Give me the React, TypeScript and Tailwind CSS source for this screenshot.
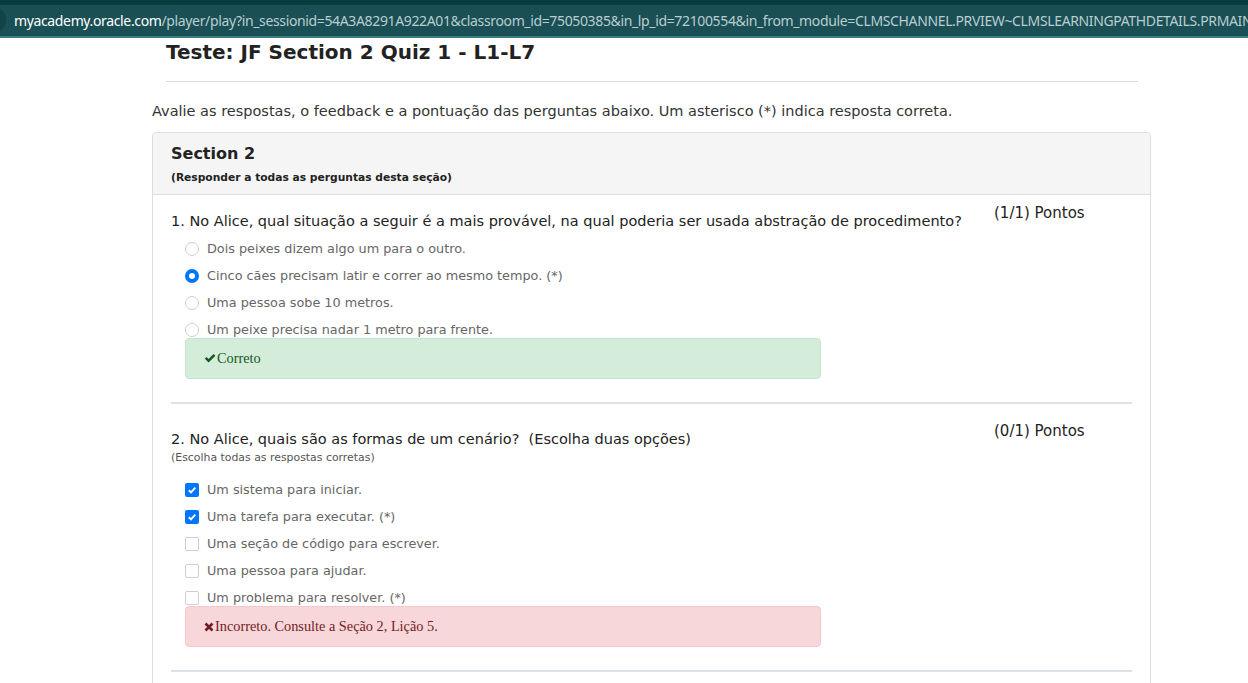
import React from "react";

const sans = { fontFamily: '"DejaVu Sans", Verdana, sans-serif' };

function Radio({ checked }: { checked?: boolean }) {
  return checked ? (
    <span className="w-[14px] h-[14px] rounded-full bg-[#0075ff] flex items-center justify-center shrink-0">
      <span className="w-[6px] h-[6px] rounded-full bg-white" />
    </span>
  ) : (
    <span className="w-[14px] h-[14px] rounded-full border border-[#cfcfcf] bg-white shrink-0" />
  );
}

function Check({ checked }: { checked?: boolean }) {
  return checked ? (
    <span className="w-[14px] h-[14px] rounded-[2px] bg-[#0075ff] flex items-center justify-center shrink-0">
      <svg width="10" height="10" viewBox="0 0 10 10">
        <path d="M1.8 5.2 L4 7.3 L8.3 2.6" stroke="white" strokeWidth="1.9" fill="none" />
      </svg>
    </span>
  ) : (
    <span className="w-[14px] h-[14px] rounded-[2px] border border-[#cfcfcf] bg-white shrink-0" />
  );
}

function Option({ children, kind, checked }: { children: React.ReactNode; kind: "radio" | "check"; checked?: boolean }) {
  return (
    <div className="h-5 flex items-center pl-[14px] gap-[8px] text-[12.8px] text-[#666]">
      {kind === "radio" ? <Radio checked={checked} /> : <Check checked={checked} />}
      <span>{children}</span>
    </div>
  );
}

export default function App() {
  return (
    <div className="w-[1248px] h-[683px] overflow-hidden bg-white" style={sans}>
      {/* address bar */}
      <div className="h-[38px] bg-[#063b40] flex flex-col">
        <div className="h-[5px]" />
        <div className="h-[31px] bg-[#1a4f55] flex items-center relative overflow-hidden">
          <span className="absolute -left-[12px] top-[4px] w-[18px] h-[22px] rounded-full bg-[#134247]" />
          <div
            className="pl-[14px] whitespace-nowrap text-[14px] leading-none"
            style={{ fontFamily: '"Noto Sans", "Open Sans", sans-serif', letterSpacing: "-0.36px" }}
          >
            <span className="text-white">myacademy.oracle.com</span>
            <span className="text-[#b9cdd0]">
              /player/play?in_sessionid=54A3A8291A922A01&amp;classroom_id=75050385&amp;in_lp_id=72100554&amp;in_from_module=CLMSCHANNEL.PRVIEW~CLMSLEARNINGPATHDETAILS.PRMAIN
            </span>
          </div>
        </div>
        <div className="h-[2px] bg-[#3b7d82]" />
      </div>

      <div className="ml-[152px] w-[999px]">
        <div className="pl-[14px] pt-[1px] h-[26px] flex items-center text-[20px] font-bold text-[#222] leading-none">
          Teste: JF Section 2 Quiz 1 - L1-L7
        </div>
        <div className="ml-[14px] mr-[13px] mt-[17px] h-px bg-[#d9d9d9]" />
        <div className="mt-[20px] h-5 flex items-center text-[14.5px] text-[#333]">
          Avalie as respostas, o feedback e a pontuação das perguntas abaixo. Um asterisco (*) indica resposta correta.
        </div>

        <div className="mt-[10px] border border-[#dddddd] rounded-[4px]">
          <div className="bg-[#f5f5f5] border-b border-[#dddddd] pl-[18px] pt-[10px] pb-[9px] rounded-t-[4px]">
            <div className="h-[22px] flex items-center text-[16px] font-bold text-[#222]">Section 2</div>
            <div className="mt-[6px] h-[14px] flex items-center text-[10.7px] font-bold text-[#222]">
              (Responder a todas as perguntas desta seção)
            </div>
          </div>

          <div className="px-[18px] pt-[8px]">
            {/* Q1 */}
            <div className="flex items-start">
              <div className="flex-1">
                <div className="mt-[9px] h-5 flex items-center text-[14.5px] text-[#222]">
                  1. No Alice, qual situação a seguir é a mais provável, na qual poderia ser usada abstração de procedimento?
                </div>
                <div className="mt-[7px] flex flex-col gap-[7px]">
                  <Option kind="radio">Dois peixes dizem algo um para o outro.</Option>
                  <Option kind="radio" checked>Cinco cães precisam latir e correr ao mesmo tempo. (*)</Option>
                  <Option kind="radio">Uma pessoa sobe 10 metros.</Option>
                  <Option kind="radio">Um peixe precisa nadar 1 metro para frente.</Option>
                </div>
              </div>
              <div className="w-[138px] shrink-0 h-5 flex items-center text-[15px] text-[#222]">(1/1) Pontos</div>
            </div>
            <div
              className="-mt-[2px] ml-[14px] w-[636px] h-[41px] bg-[#d4edda] border border-[#c3e6cb] rounded-[4px] flex items-center pl-[18px] text-[14.3px] text-[#155724]"
              style={{ fontFamily: '"Liberation Serif", "Times New Roman", serif' }}
            >
              <svg width="12" height="11" viewBox="0 0 12 11" className="mr-[1px]">
                <path d="M0.8 5.8 L2.6 4 L4.6 6 L9.6 1 L11.4 2.8 L4.6 9.6 Z" fill="#155724" />
              </svg>
              Correto
            </div>
            <div className="mt-[23px] h-[2px] bg-[#dee2e6]" />

            {/* Q2 */}
            <div className="flex items-start mt-[17px]">
              <div className="flex-1">
                <div className="mt-[9px] h-5 flex items-center text-[14.5px] text-[#222] whitespace-pre">
                  2. No Alice, quais são as formas de um cenário?  (Escolha duas opções)
                </div>
                <div className="mt-[1px] h-[14px] flex items-center text-[10.9px] text-[#555]">
                  (Escolha todas as respostas corretas)
                </div>
                <div className="mt-[15px] flex flex-col gap-[7px]">
                  <Option kind="check" checked>Um sistema para iniciar.</Option>
                  <Option kind="check" checked>Uma tarefa para executar. (*)</Option>
                  <Option kind="check">Uma seção de código para escrever.</Option>
                  <Option kind="check">Uma pessoa para ajudar.</Option>
                  <Option kind="check">Um problema para resolver. (*)</Option>
                </div>
              </div>
              <div className="w-[138px] shrink-0 h-5 flex items-center text-[15px] text-[#222]">(0/1) Pontos</div>
            </div>
            <div
              className="-mt-[2px] ml-[14px] w-[636px] h-[41px] bg-[#f8d7da] border border-[#f5c6cb] rounded-[4px] flex items-center pl-[18px] text-[14.3px] text-[#721c24]"
              style={{ fontFamily: '"Liberation Serif", "Times New Roman", serif' }}
            >
              <svg width="10" height="10" viewBox="0 0 10 10" className="mr-[1px]">
                <path d="M1.5 1.5 L8.5 8.5 M8.5 1.5 L1.5 8.5" stroke="#721c24" strokeWidth="2.6" />
              </svg>
              Incorreto. Consulte a Seção 2, Lição 5.
            </div>
            <div className="mt-[23px] h-[2px] bg-[#dee2e6]" />
            <div className="h-[40px]" />
          </div>
        </div>
      </div>
    </div>
  );
}
